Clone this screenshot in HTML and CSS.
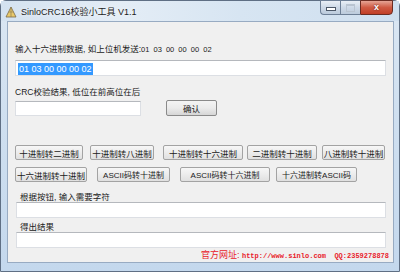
FILE: index.html
```html
<!DOCTYPE html>
<html lang="zh">
<head>
    <meta charset="UTF-8">
    <title>SinloCRC16校验小工具 V1.1</title>
    <link rel="stylesheet" href="styles.css">
</head>
<body>

<div class="window">
    <div class="titlebar">
        <svg class="app_icon" width="12" height="12" viewBox="0 0 12 12">
            <polygon points="6,1 11,11 1,11" fill="#e9c96a" stroke="#7a6a48" stroke-width="0.8"/>
            <line x1="6" y1="1" x2="6" y2="11" stroke="#8d7c55" stroke-width="0.7"/>
            <line x1="3.5" y1="6" x2="8.5" y2="6" stroke="#8d7c55" stroke-width="0.6"/>
        </svg>
        <span class="title">SinloCRC16校验小工具 V1.1</span>
        <div class="caption">
            <div class="cap cap_min"><i></i></div>
            <div class="cap cap_max"><i></i></div>
            <div class="cap cap_close">x</div>
        </div>
    </div>

    <div class="client">
        <div class="label l1">输入十六进制数据, 如上位机发送:<span class="hex">01 03 00 00 00 02</span></div>
        <div class="field f1"><span class="sel">01 03 00 00 00 02</span></div>

        <div class="label l2">CRC校验结果, 低位在前高位在后</div>
        <div class="crc_row">
            <div class="field f2"></div>
            <div class="btn btn_ok">确认</div>
        </div>

        <div class="btn_row r1">
            <div class="btn">十进制转二进制</div>
            <div class="btn">十进制转八进制</div>
            <div class="btn">十进制转十六进制</div>
            <div class="btn">二进制转十进制</div>
            <div class="btn">八进制转十进制</div>
        </div>
        <div class="btn_row r2">
            <div class="btn">十六进制转十进制</div>
            <div class="btn">ASCII码转十进制</div>
            <div class="btn">ASCII码转十六进制</div>
            <div class="btn">十六进制转ASCII码</div>
        </div>

        <div class="label l3">根据按钮, 输入需要字符</div>
        <div class="field f3"></div>
        <div class="label l4">得出结果</div>
        <div class="field f3"></div>

        <div class="footer">官方网址: <span class="url">http://www.sinlo.com&nbsp;&nbsp;QQ:2359278878</span></div>
    </div>
</div>

</body>
</html>
```

FILE: styles.css
```css
html, body {
    margin: 0;
    padding: 0;
    overflow: hidden;
}
body {
    width: 400px;
    height: 272px;
    font-family: "Liberation Sans", "Noto Sans CJK SC", sans-serif;
    color: #1a1a1a;
}
.window {
    box-sizing: border-box;
    width: 400px;
    height: 272px;
    border: 1px solid #5f6f84;
    border-radius: 6px 6px 0 0;
    background: linear-gradient(to bottom, #dbe7f3 0%, #d0e0f0 40%, #c4d8ed 100%);
    padding: 0 5px 8px 6px;
    display: flex;
    flex-direction: column;
}
.titlebar {
    height: 20px;
    display: flex;
    align-items: center;
    margin: 0 -5px 0 -6px;
    padding-left: 4px;
    background: linear-gradient(to right, #d4e2f0 0%, #e4edf6 30%, #d7e5f2 60%, #cfdfef 100%);
}
.app_icon {
    margin-top: 1px;
}
.title {
    margin-left: 4px;
    font-size: 9px;
    color: #1c1c1c;
    text-shadow: 0 0 4px #fff;
}
.caption {
    margin-left: auto;
    margin-right: 6px;
    align-self: flex-start;
    margin-top: -1px;
    display: flex;
}
.cap {
    box-sizing: border-box;
    height: 15px;
    border: 1px solid #6d7f96;
    display: flex;
    align-items: center;
    justify-content: center;
}
.cap_min {
    width: 20px;
    border-right: 0;
    border-radius: 0 0 0 4px;
    background: linear-gradient(to bottom, #e9eff6, #cdd9e7 50%, #bccbdc);
}
.cap_min i {
    display: block;
    width: 8px;
    height: 2px;
    margin-top: 3px;
    background: #fff;
    border: 1px solid #4c5868;
}
.cap_max {
    width: 20px;
    border-right: 0;
    background: linear-gradient(to bottom, #e9eff6, #cdd9e7 50%, #bccbdc);
}
.cap_max i {
    display: block;
    width: 7px;
    height: 5px;
    border: 1px solid #b9c4d1;
    border-top-width: 2px;
}
.cap_close {
    width: 33px;
    border-color: #6b2c22;
    border-radius: 0 0 4px 0;
    background: linear-gradient(to bottom, #e6a595, #cf5a43 50%, #c13f27);
    color: #fff;
    font-size: 9px;
    font-weight: bold;
    line-height: 1;
    text-shadow: 0 0 2px #5a1a10;
}

.client {
    flex: 1;
    background: #f0f0f0;
    border: 1px solid #98abc2;
    padding: 0 4px 0 7px;
    font-size: 8.5px;
}
.label {
    line-height: 10px;
    white-space: nowrap;
}
.l1 {
    margin-top: 22px;
}
.hex {
    font-size: 7.5px;
    word-spacing: 2px;
}
.field {
    box-sizing: border-box;
    height: 16px;
    background: #fff;
    border: 1px solid #dcdfe4;
    border-top-color: #b5b8bd;
}
.f1 {
    margin-top: 5px;
    width: 371px;
    padding: 1px 0 0 2px;
    display: flex;
    align-items: center;
}
.sel {
    background: #3399ff;
    color: #fff;
    font-size: 9px;
    line-height: 12px;
    padding: 0 1px;
}
.l2 {
    margin-top: 11px;
}
.crc_row {
    margin-top: 3px;
    display: flex;
    align-items: flex-start;
}
.f2 {
    margin-top: 1px;
    width: 126px;
    height: 15px;
}
.btn {
    box-sizing: border-box;
    height: 15px;
    border: 1px solid #a3a3a3;
    border-radius: 2px;
    background: linear-gradient(to bottom, #f7f7f7, #ececec 50%, #e0e0e0);
    display: flex;
    align-items: center;
    justify-content: center;
    white-space: nowrap;
    font-size: 8.5px;
}
.btn_ok {
    margin-left: 25px;
    width: 51px;
    height: 16px;
    border-color: #8a8a8a;
    background: linear-gradient(to bottom, #f4f4f4, #ebebeb 50%, #d6d6d6);
}
.btn_row {
    display: flex;
}
.r1 {
    margin-top: 29px;
}
.r1 .btn:nth-child(1) { width: 68px; }
.r1 .btn:nth-child(2) { width: 64px; margin-left: 7px; }
.r1 .btn:nth-child(3) { width: 80px; margin-left: 9px; }
.r1 .btn:nth-child(4) { width: 70px; margin-left: 4px; }
.r1 .btn:nth-child(5) { width: 63px; margin-left: 5px; }
.r2 {
    margin-top: 7px;
}
.r2 .btn:nth-child(1) { width: 72px; }
.r2 .btn:nth-child(2) { width: 73px; margin-left: 10px; }
.r2 .btn:nth-child(3) { width: 90px; margin-left: 10px; }
.r2 .btn:nth-child(4) { width: 81px; margin-left: 6px; }
.r2 .btn:nth-child(n+2) {
    font-size: 8px;
}
.l3 {
    margin-top: 10px;
    margin-left: 5px;
}
.f3 {
    margin-left: 1px;
    width: 370px;
}
.l4 {
    margin-top: 4px;
    margin-left: 5px;
}
.footer {
    margin-top: 2px;
    line-height: 10px;
    text-align: right;
    color: #e8202a;
    font-size: 9px;
    white-space: nowrap;
}
.url {
    font-family: "Liberation Mono", monospace;
    font-size: 7px;
    font-weight: bold;
}
```
